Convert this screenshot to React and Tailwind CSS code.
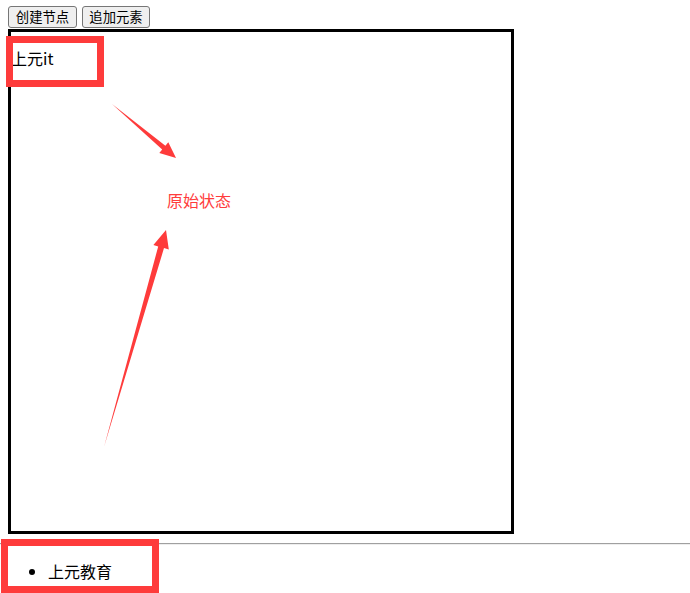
import React from "react";

// annotation red
const RED = "#fe3b3b";

function Arrows() {
  return (
    <svg className="absolute left-0 top-0 pointer-events-none" width="690" height="593" viewBox="0 0 690 593">
      {/* top arrow pointing down-right to the label */}
      <polygon
        points="112,104 162.2,149.6 159.3,153.1 176,158 168.3,142.3 165.4,145.8"
        fill={RED}
      />
      {/* long arrow pointing up to the label */}
      <polygon
        points="104,447 158.2,246.5 153.4,245.1 166,230 168.8,249.5 164,248.1"
        fill={RED}
      />
    </svg>
  );
}

export default function App() {
  return (
    <div className="relative h-[593px] overflow-hidden bg-white text-black font-['Microsoft_YaHei','Noto_Sans_CJK_SC',sans-serif]">
      <div className="px-2 pt-[6px]">
        {/* buttons */}
        <div className="flex items-start gap-[5px] h-[23px]">
          <button className="h-[22px] w-[69px] text-[13.33px] leading-none bg-[#efefef] border border-[#767676] rounded-[3px]">
            创建节点
          </button>
          <button className="h-[22px] w-[68px] text-[13.33px] leading-none bg-[#efefef] border border-[#767676] rounded-[3px]">
            追加元素
          </button>
        </div>

        {/* box */}
        <div className="w-[506px] h-[505px] border-[3px] border-black pt-4">
          <p className="text-base leading-5">上元it</p>
        </div>
      </div>

      <div className="mt-[9px] h-[2px] border-t border-[#a0a0a0] border-b border-b-[#eeeeee]" />

      <ul className="list-disc pl-12 mt-4">
        <li className="text-base leading-5">上元教育</li>
      </ul>

      {/* annotations */}
      <div className="absolute left-[167px] top-[190px] text-base leading-5 text-[#ff3c3c]">原始状态</div>
      <Arrows />
      <div className="absolute left-[6px] top-[36px] w-[98px] h-[51px] border-[7px] border-[#fe3b3b]" />
      <div className="absolute left-[1px] top-[539px] w-[158px] h-[54px] border-[7px] border-[#fe3b3b]" />
    </div>
  );
}
